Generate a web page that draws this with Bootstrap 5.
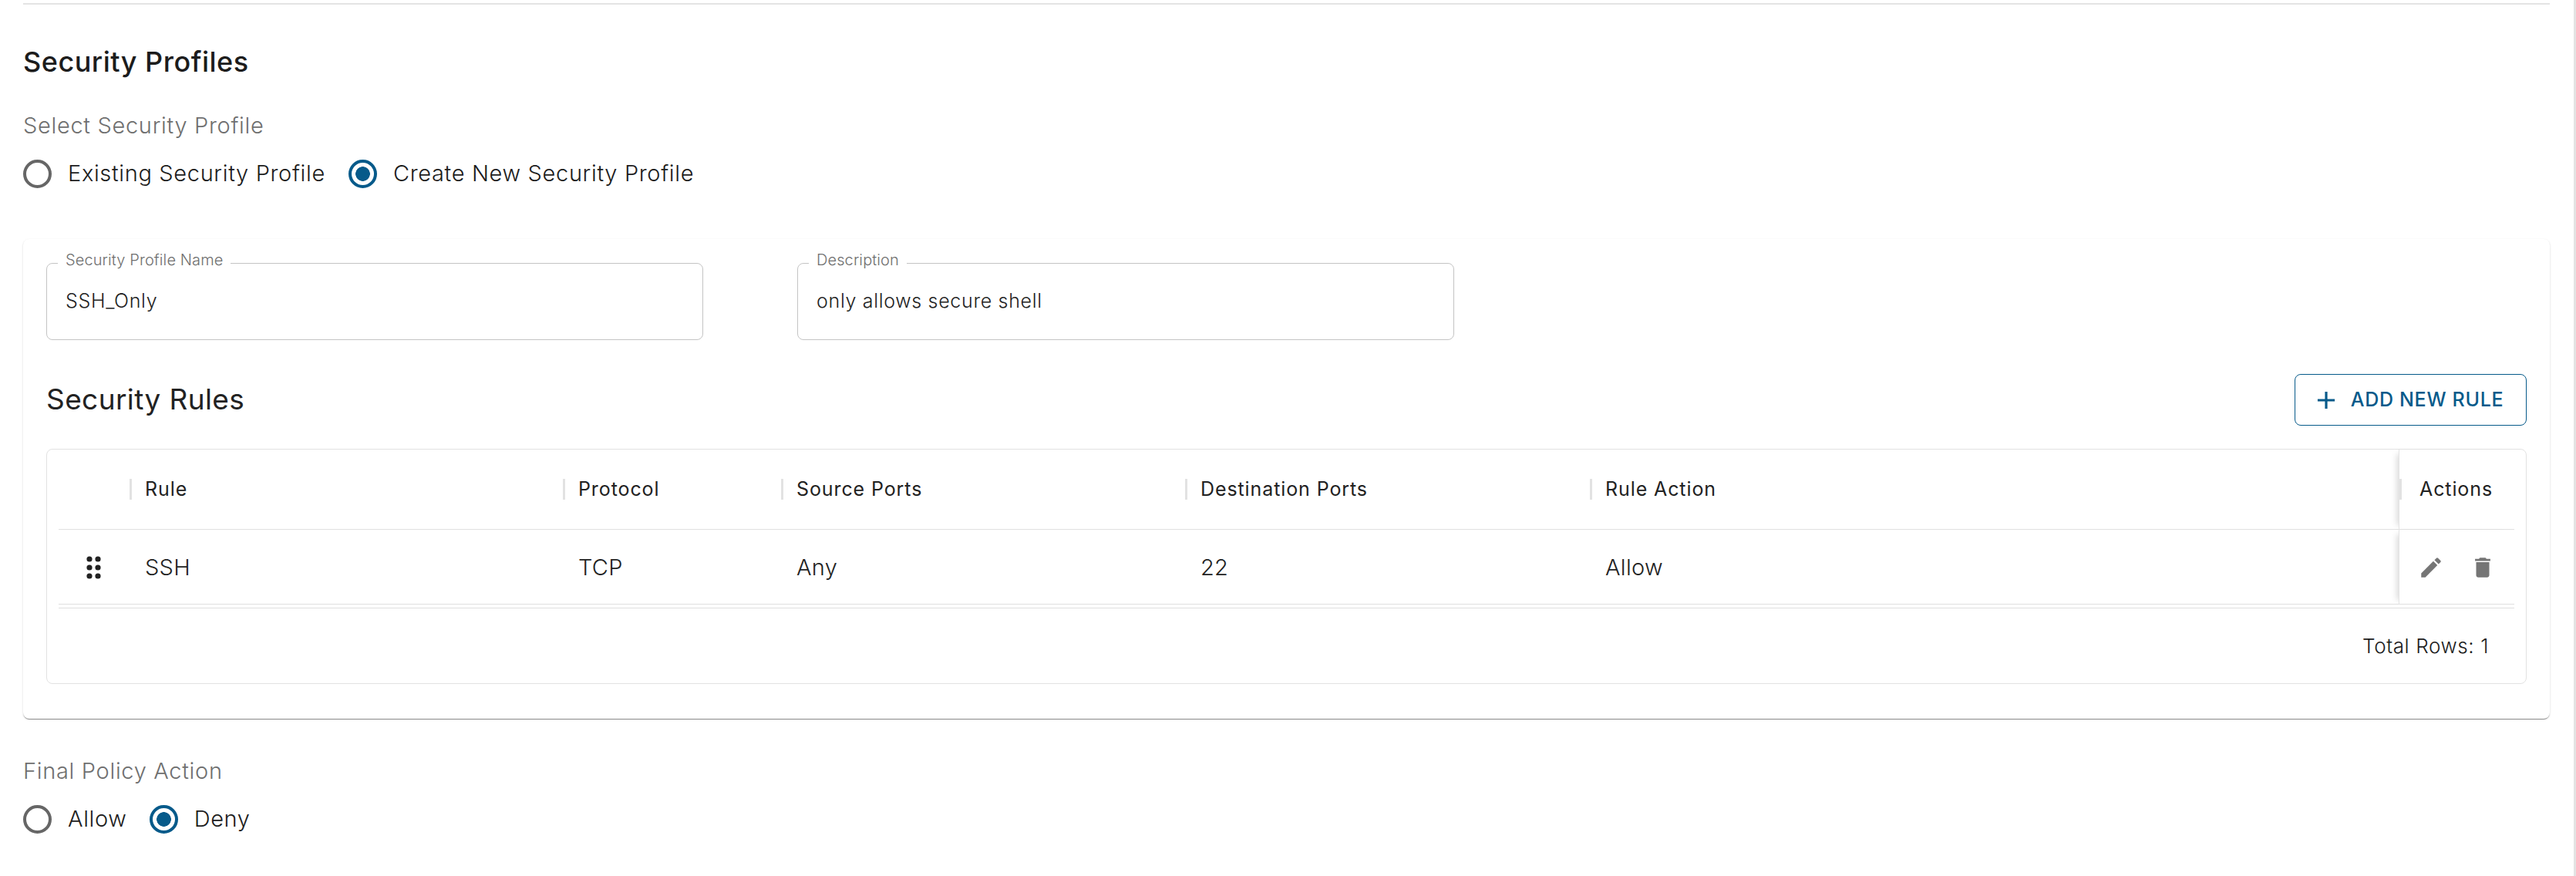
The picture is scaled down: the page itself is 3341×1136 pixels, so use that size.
<!DOCTYPE html>
<html lang="en">
<head>
<meta charset="utf-8">
<title>Security Profiles</title>
<link href="https://cdn.jsdelivr.net/npm/bootstrap@5.3.0/dist/css/bootstrap.min.css" rel="stylesheet">
<style>
html,body{height:100%}
body{font-family:Inter,"Liberation Sans",sans-serif;color:#1c1c1c;background:#fff;overflow:hidden;border-right:3px solid #e3e3e3}
.page-col{width:3277px;margin-left:30px;height:1136px}
.top-rule{height:2px;background:#e4e4e4;margin-top:4px}
.page-title{font-size:36px;font-weight:450;line-height:44px;margin:52px 0 0;color:#1c1c1c;letter-spacing:.5px}
.group-label{font-size:29px;line-height:36px;color:#6f6f6f;letter-spacing:.68px;font-weight:350}
.select-label{margin-top:43px}
.radio-set{height:38px;margin-top:25px}
.radio-item{gap:21px;margin-right:30px}
.final-set .radio-item{margin-right:29px}
.radio-item .form-check-input{width:37px;height:37px;margin:0;border:4px solid #666;background:#fff;box-shadow:none;flex:none;float:none}
.radio-item .form-check-input:checked{border-color:#065a8a;background-color:#fff;background-image:radial-gradient(circle,#065a8a 0 9px,transparent 9.6px)}
.radio-item .form-check-label{font-size:29px;line-height:38px;color:#1c1c1c;letter-spacing:.65px;font-weight:350}
.form-panel{margin-top:66px;height:622px;padding:15px 30px 0;border:0;border-radius:8px;box-shadow:0 2px 1px -1px rgba(0,0,0,.3),0 1px 1px rgba(0,0,0,.14),0 1px 3px rgba(0,0,0,.12)}
.outline-field{width:852px;height:116px;border:1px solid #c4c4c4;border-radius:8px;padding:0 24px;margin:0}
.outline-field legend{float:none;width:auto;margin:0 0 0 -10px;padding:0 10px 8px;font-size:20px;line-height:24px;color:#6f6f6f;font-weight:350;letter-spacing:.1px}
.outline-field .field-val{font-size:25px;line-height:30px;margin-top:18px;color:#222;letter-spacing:.68px;font-weight:350}
.field-row{gap:122px;height:116px}
.rules-head{margin-top:44px;height:67px}
.rules-title{font-size:37px;font-weight:400;margin:0;color:#222;letter-spacing:.4px}
.add-btn{width:301px;height:67px;border:1px solid #065a8a;color:#065a8a;border-radius:8px;font-size:25px;font-weight:450;padding:0 8px 0 0;gap:13px;background:#fff;letter-spacing:.7px}
.add-btn:hover{color:#065a8a;background:#fff;border-color:#065a8a}
.grid-box{margin-top:30px;height:305px;border:1px solid #e2e2e2;border-radius:8px;padding:0 15px}
.rules-table{table-layout:fixed;width:3185px;margin:0;border-collapse:separate;border-spacing:0}
.rules-table th,.rules-table td{padding:0;border-bottom:1px solid #e0e0e0;background:#fff;vertical-align:middle;box-shadow:none;color:#222}
.rules-table th{height:104px;font-size:25px;font-weight:400;letter-spacing:.9px}
.rules-table td{height:97px;font-size:29px;font-weight:350;letter-spacing:.3px;padding-top:2px}
.rules-table .spacer-row td{height:5px;padding-top:0}
.head-cell{position:relative;padding-left:20px;display:block}
.head-cell::before{content:"";position:absolute;left:0;top:50%;margin-top:-14px;width:3px;height:27px;background:#e2e2e2}
.body-cell{padding-left:20px;display:block}
.rules-table .pin-col{box-shadow:-8px 0 8px -6px rgba(0,0,0,.16);border-left:1px solid #e4e4e4}
.rules-table .spacer-row .pin-col{box-shadow:none;border-left:0}
.rules-table td.pin-col{padding-left:24px}
.rules-table th.pin-col .head-cell{padding-left:26px}
.rules-table td .grip{display:block;margin-left:36px}
.act-icons{gap:33px}
.act-icon{fill:#757575;display:block}
.rows-total{font-size:26px;height:96px;padding-right:33px;color:#1c1c1c;letter-spacing:.6px;font-weight:350}
.final-label{margin-top:50px}
</style>
</head>
<body>
<div class="page-col">
  <div class="top-rule"></div>
  <h1 class="page-title">Security Profiles</h1>
  <div class="group-label select-label">Select Security Profile</div>
  <div class="radio-set d-flex align-items-center">
    <div class="radio-item d-flex align-items-center">
      <input class="form-check-input" type="radio" name="profile" id="p1">
      <label class="form-check-label" for="p1">Existing Security Profile</label>
    </div>
    <div class="radio-item d-flex align-items-center">
      <input class="form-check-input" type="radio" name="profile" id="p2" checked>
      <label class="form-check-label" for="p2">Create New Security Profile</label>
    </div>
  </div>

  <div class="card form-panel">
    <div class="field-row d-flex">
      <fieldset class="outline-field">
        <legend>Security Profile Name</legend>
        <div class="field-val">SSH_Only</div>
      </fieldset>
      <fieldset class="outline-field">
        <legend>Description</legend>
        <div class="field-val">only allows secure shell</div>
      </fieldset>
    </div>
    <div class="rules-head d-flex justify-content-between align-items-center">
      <h2 class="rules-title">Security Rules</h2>
      <button type="button" class="btn add-btn d-flex align-items-center justify-content-center">
        <svg width="38" height="38" viewBox="0 0 24 24" fill="#065a8a"><path d="M19 13h-6v6h-2v-6H5v-2h6V5h2v6h6v2z"/></svg>
        <span>ADD NEW RULE</span>
      </button>
    </div>
    <div class="grid-box">
      <table class="table rules-table">
        <colgroup>
          <col style="width:92px"><col style="width:562px"><col style="width:283px"><col style="width:524px"><col style="width:525px"><col style="width:1049px"><col style="width:150px">
        </colgroup>
        <thead>
          <tr>
            <th></th>
            <th><span class="head-cell">Rule</span></th>
            <th><span class="head-cell">Protocol</span></th>
            <th><span class="head-cell">Source Ports</span></th>
            <th><span class="head-cell">Destination Ports</span></th>
            <th><span class="head-cell">Rule Action</span></th>
            <th class="pin-col"><span class="head-cell">Actions</span></th>
          </tr>
        </thead>
        <tbody>
          <tr>
            <td>
              <svg class="grip" width="20" height="32" viewBox="0 0 20 32" fill="#222"><circle cx="4" cy="5" r="3.6"/><circle cx="15" cy="5" r="3.6"/><circle cx="4" cy="16" r="3.6"/><circle cx="15" cy="16" r="3.6"/><circle cx="4" cy="27" r="3.6"/><circle cx="15" cy="27" r="3.6"/></svg>
            </td>
            <td><span class="body-cell">SSH</span></td>
            <td><span class="body-cell">TCP</span></td>
            <td><span class="body-cell">Any</span></td>
            <td><span class="body-cell">22</span></td>
            <td><span class="body-cell">Allow</span></td>
            <td class="pin-col">
              <div class="act-icons d-flex align-items-center">
                <svg class="act-icon" width="34" height="34" viewBox="0 0 24 24"><path d="M3 17.25V21h3.75L17.81 9.94l-3.75-3.75L3 17.25zM20.71 7.04c.39-.39.39-1.02 0-1.41l-2.34-2.34a.9959.9959 0 0 0-1.41 0l-1.83 1.83 3.75 3.75 1.83-1.83z"/></svg>
                <svg class="act-icon" width="34" height="34" viewBox="0 0 24 24"><path d="M6 19c0 1.1.9 2 2 2h8c1.1 0 2-.9 2-2V7H6v12zM19 4h-3.5l-1-1h-5l-1 1H5v2h14V4z"/></svg>
              </div>
            </td>
          </tr>
          <tr class="spacer-row"><td></td><td></td><td></td><td></td><td></td><td></td><td class="pin-col"></td></tr>
        </tbody>
      </table>
      <div class="rows-total d-flex align-items-center justify-content-end">Total Rows: 1</div>
    </div>
  </div>

  <div class="group-label final-label">Final Policy Action</div>
  <div class="radio-set final-set d-flex align-items-center">
    <div class="radio-item d-flex align-items-center">
      <input class="form-check-input" type="radio" name="finalaction" id="a1">
      <label class="form-check-label" for="a1">Allow</label>
    </div>
    <div class="radio-item d-flex align-items-center">
      <input class="form-check-input" type="radio" name="finalaction" id="a2" checked>
      <label class="form-check-label" for="a2">Deny</label>
    </div>
  </div>
</div>
<script src="https://cdn.jsdelivr.net/npm/bootstrap@5.3.0/dist/js/bootstrap.bundle.min.js"></script>
</body>
</html>
